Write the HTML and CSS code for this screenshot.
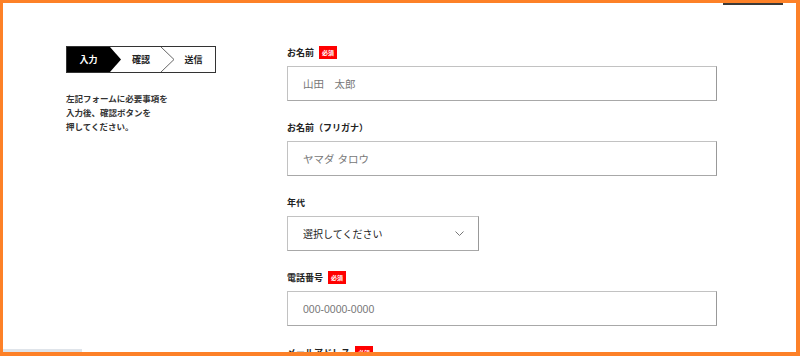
FILE: index.html
```html
<!DOCTYPE html>
<html lang="ja">
<head>
    <meta charset="UTF-8">
    <meta name="viewport" content="width=device-width, initial-scale=1.0">
    <title>お問い合わせ</title>
    <link rel="stylesheet" href="styles.css">
</head>
<body>
    <div class="frame">
        <div class="top-bar"></div>
        <div class="bottom-bar"></div>

        <div class="contact">
            <aside class="side">
                <div class="steps">
                    <svg class="steps-bg" width="148" height="25" viewBox="0 0 148 25">
                        <polygon points="0,0 43,0 54,12.5 43,25 0,25" fill="#000"/>
                        <polyline points="94,0 107,12.5 94,25" fill="none" stroke="#666" stroke-width="1"/>
                    </svg>
                    <span class="step step-current">入力</span>
                    <span class="step step-2">確認</span>
                    <span class="step step-3">送信</span>
                </div>
                <p class="side-text">左記フォームに必要事項を<br>入力後、確認ボタンを<br>押してください。</p>
            </aside>

            <form class="form">
                <div class="form-group">
                    <label for="name">お名前 <span class="required">必須</span></label>
                    <input type="text" id="name" placeholder="山田　太郎">
                </div>

                <div class="form-group">
                    <label for="kana">お名前（フリガナ）</label>
                    <input type="text" id="kana" placeholder="ヤマダ タロウ">
                </div>

                <div class="form-group">
                    <label for="age">年代</label>
                    <div class="select-wrap">
                        <select id="age">
                            <option>選択してください</option>
                            <option>10代</option>
                            <option>20代</option>
                            <option>30代</option>
                        </select>
                        <svg class="chevron" width="9" height="5" viewBox="0 0 9 5">
                            <polyline points="0.5,0.5 4.5,4.5 8.5,0.5" fill="none" stroke="#777" stroke-width="1"/>
                        </svg>
                    </div>
                </div>

                <div class="form-group">
                    <label for="tel">電話番号 <span class="required">必須</span></label>
                    <input type="tel" id="tel" placeholder="000-0000-0000">
                </div>

                <div class="form-group">
                    <label for="mail">メールアドレス <span class="required">必須</span></label>
                    <input type="email" id="mail" placeholder="sample@example.com">
                </div>
            </form>
        </div>
    </div>
</body>
</html>
```

FILE: styles.css
```css
:root {
    --orange: #fd8128;
    --text-color: #222;
    --border-color: #c2c2c2;
    --required-color: #f00;
}

* {
    margin: 0;
    padding: 0;
    box-sizing: border-box;
}

body {
    font-family: "Noto Sans CJK JP", "Liberation Sans", sans-serif;
    color: var(--text-color);
    background-color: #fff;
}

.frame {
    position: relative;
    height: 356px;
    overflow: hidden;
    border: 3px solid var(--orange);
    border-right-width: 4px;
    border-bottom-width: 4px;
}

/* bits of the page peeking out from behind the frame */
.top-bar {
    position: absolute;
    top: 0;
    right: 13px;
    width: 60px;
    height: 2px;
    background-color: #3a3a3a;
}

.bottom-bar {
    position: absolute;
    left: 0;
    bottom: 0;
    width: 79px;
    height: 3px;
    background-color: #dfe4ea;
}

.contact {
    display: grid;
    grid-template-columns: 221px 430px;
    padding: 43px 0 0 63px;
}

/* steps */
.steps {
    position: relative;
    display: flex;
    width: 150px;
    height: 27px;
    border: 1px solid #333;
}

.steps-bg {
    position: absolute;
    top: 0;
    left: 0;
}

.step {
    position: relative;
    display: flex;
    align-items: center;
    justify-content: center;
    font-size: 9px;
    font-weight: 700;
    line-height: 1;
}

.step-current {
    width: 43px;
    color: #fff;
}

.step-2 {
    width: 62px;
}

.step-3 {
    width: 43px;
}

.side-text {
    margin-top: 18px;
    font-size: 8.5px;
    font-weight: 700;
    line-height: 14px;
    color: #333;
}

/* form */
.form-group {
    margin-bottom: 20px;
}

label {
    display: flex;
    align-items: center;
    gap: 5px;
    height: 13px;
    margin-bottom: 7px;
    font-size: 9px;
    font-weight: 700;
    line-height: 13px;
}

.required {
    display: inline-block;
    height: 13px;
    padding: 0 3px;
    background-color: var(--required-color);
    color: #fff;
    font-size: 6px;
    line-height: 13px;
}

input,
select {
    display: block;
    height: 35px;
    padding: 0 15px;
    border: 1px solid var(--border-color);
    border-right-color: #999;
    border-bottom-color: #a8a8a8;
    border-radius: 0;
    background-color: #fff;
    font-family: "Liberation Sans", "Noto Sans CJK JP", sans-serif;
    font-size: 10.5px;
    color: #333;
    outline: none;
}

input {
    width: 100%;
}

input::placeholder {
    color: #777;
}

.select-wrap {
    position: relative;
    width: 192px;
}

select {
    width: 100%;
    appearance: none;
    -webkit-appearance: none;
    font-family: "Noto Sans CJK JP", sans-serif;
    font-size: 10px;
    color: #222;
}

.chevron {
    position: absolute;
    top: 15px;
    right: 15px;
    pointer-events: none;
}
```
